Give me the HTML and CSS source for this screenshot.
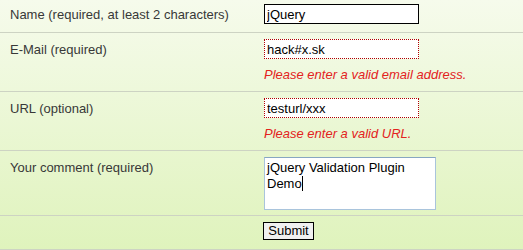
FILE: index.html
```html
<!DOCTYPE html>
<html lang="en">
<head>
    <meta charset="UTF-8">
    <meta name="viewport" content="width=device-width, initial-scale=1.0">
    <title>jQuery Validation Plugin Demo</title>
    <link rel="stylesheet" href="styles.css">
</head>
<body>
    <form id="commentForm">
        <div class="row first">
            <label for="cname">Name (required, at least 2 characters)</label>
            <div class="field">
                <input id="cname" class="txt" type="text" value="jQuery">
            </div>
        </div>
        <div class="row">
            <label for="cemail">E-Mail (required)</label>
            <div class="field">
                <input id="cemail" class="txt invalid" type="text" value="hack#x.sk">
                <em class="error">Please enter a valid email address.</em>
            </div>
        </div>
        <div class="row">
            <label for="curl">URL (optional)</label>
            <div class="field">
                <input id="curl" class="txt invalid" type="text" value="testurl/xxx">
                <em class="error">Please enter a valid URL.</em>
            </div>
        </div>
        <div class="row comment-row">
            <label for="ccomment">Your comment (required)</label>
            <div class="field">
                <div id="ccomment" class="comment">jQuery Validation Plugin<br>Demo<span class="caret"></span></div>
            </div>
        </div>
        <div class="row last">
            <span></span>
            <div class="field">
                <button type="submit" class="submit">Submit</button>
            </div>
        </div>
    </form>
</body>
</html>
```

FILE: styles.css
```css
body{
    margin: 0;
    height: 250px;
    background: linear-gradient(#f6fbec, #dff3bc);
    font-family: "Liberation Sans", Arial, sans-serif;
    font-size: 13px;
    color: #383838;
}
.row{
    display: grid;
    grid-template-columns: 264px 1fr;
    padding: 6px 0 8px;
    border-bottom: 1px solid #cdd3c3;
}
.row.first{
    padding: 4px 0 8px;
}
.row.comment-row{
    padding: 6px 0 5px;
}
.row.last{
    padding: 6px 0 9px;
}
.row label{
    padding: 2px 0 0 10px;
    line-height: 18px;
}
.field{
    display: flex;
    flex-direction: column;
    align-items: flex-start;
}
.txt{
    box-sizing: border-box;
    width: 155px;
    height: 20px;
    margin: 0;
    padding: 0 2px;
    border: 1px solid #000;
    background: #fff;
    font-family: "Liberation Sans", Arial, sans-serif;
    font-size: 13px;
    color: #000;
    outline: none;
}
.txt.invalid{
    border: 1px dotted #b00000;
}
.error{
    margin-top: 8px;
    line-height: 16px;
    color: #e3231d;
    font-style: italic;
}
.comment{
    box-sizing: border-box;
    width: 172px;
    height: 53px;
    padding: 2px 2px;
    border: 1px solid #a9c4dc;
    border-top-color: #87a6c2;
    background: #fff;
    color: #000;
    line-height: 16px;
}
.caret{
    display: inline-block;
    width: 0;
    height: 15px;
    border-left: 1px solid #000;
    vertical-align: -3px;
}
.submit{
    box-sizing: border-box;
    height: 18px;
    width: 51px;
    margin-left: -1px;
    padding: 0;
    border: 1px solid #000;
    background: #f0f0f0;
    font-family: "Liberation Sans", Arial, sans-serif;
    font-size: 13px;
    color: #000;
    line-height: 16px;
}
```
